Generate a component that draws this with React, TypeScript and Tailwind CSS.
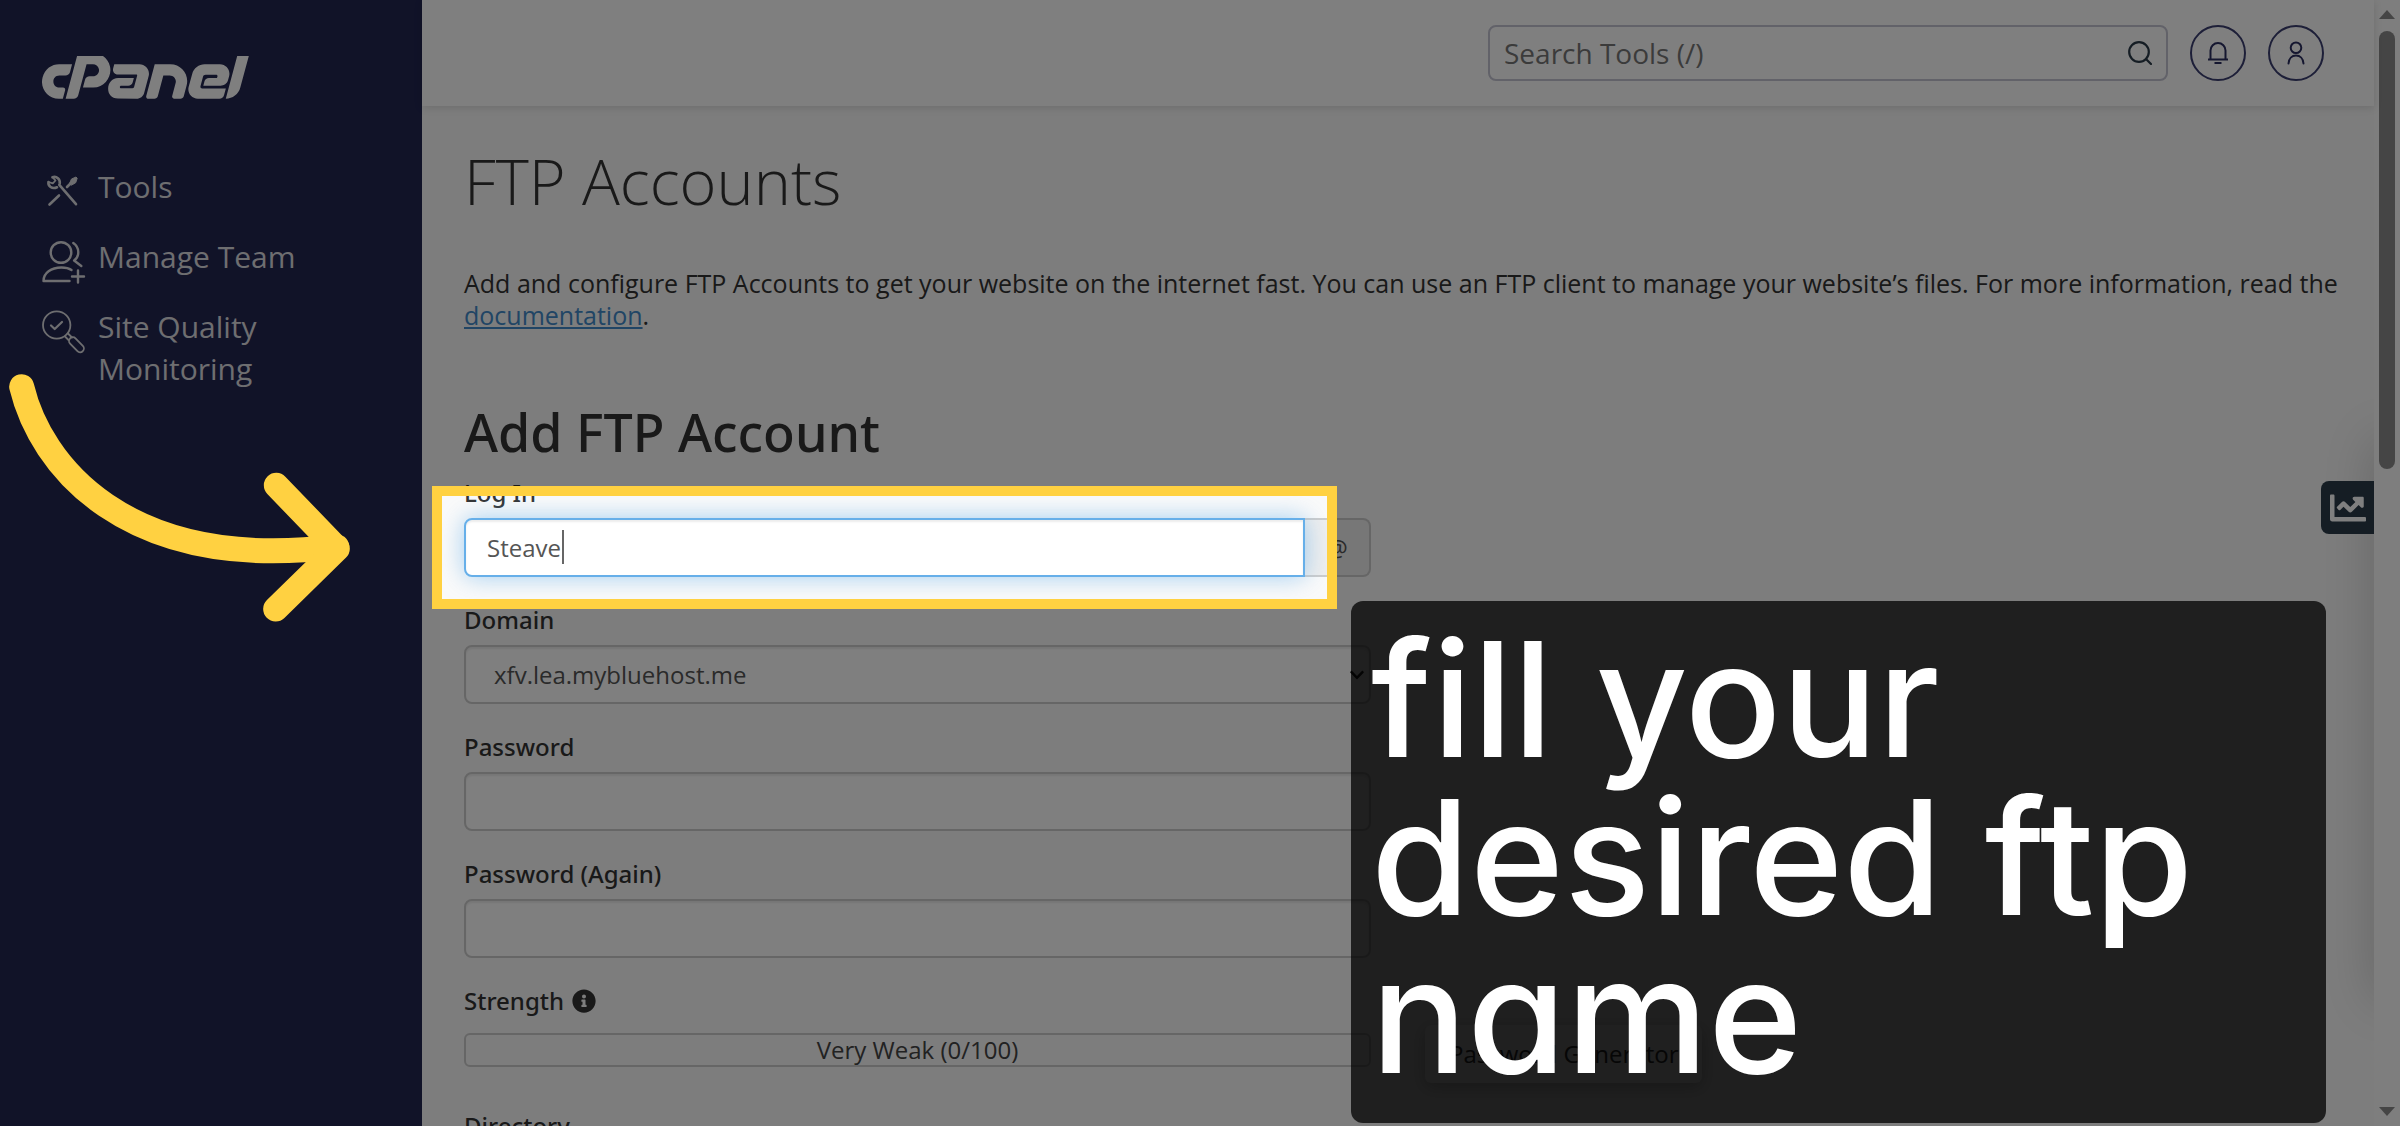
import type { ReactNode } from "react";
import { FaChartLine, FaChevronDown, FaCpanel, FaInfoCircle } from "react-icons/fa";

const controlClass =
  "block h-[59px] w-full rounded-lg border-2 border-[#ccc] bg-white px-[21px] text-2xl text-[#555] shadow-[inset_0_2px_2px_rgba(0,0,0,0.075)] outline-none";

function ToolsIcon() {
  return (
    <svg viewBox="0 0 44 44" className="size-11" fill="none" stroke="currentColor" strokeWidth="2.6" strokeLinecap="round" strokeLinejoin="round" aria-hidden="true">
      <path d="M10.5 7.2c4-1.400 8 1.800 7.200 6.300l-.4 1.400L34 34.200M6.500 12c-.8 4 3.500 7.500 8.500 5.300" />
      <path d="M10.500 7.200l3 3.300-2.700 2.800L6.500 12" strokeWidth="1.800" />
      <path d="M7.500 34.500l9.500-9M25 17l4-4" />
      <path d="M27.500 13.500l2-4.500 4.500-2 1.200 1.200-1.500 4.500-4 2.300z" fill="currentColor" strokeWidth="1" />
    </svg>
  );
}

function TeamIcon() {
  return (
    <svg viewBox="0 0 44 44" className="size-11" fill="none" stroke="currentColor" strokeWidth="2.400" strokeLinecap="round" strokeLinejoin="round" aria-hidden="true">
      <circle cx="19" cy="12.500" r="10.300" />
      <path d="M31.300 3c6.500 4.500 6.500 13.500.8 17.500l7.200 5.500" />
      <path d="M27.500 41H1.500c0-8 7.500-13.500 18-13.500 4 0 7.500.8 10 2.500" />
      <path d="M36 30.500v12M30 36.500h12" />
    </svg>
  );
}

function QualityIcon() {
  return (
    <svg viewBox="0 0 44 44" className="size-11" fill="none" stroke="currentColor" strokeWidth="1.800" strokeLinecap="round" strokeLinejoin="round" aria-hidden="true">
      <circle cx="14.700" cy="15" r="13.700" />
      <path d="M9 15.500l3.700 3.500 7.300-7" strokeWidth="2.200" />
      <path d="M23 26.500l3.500 3.500M26 23.500l4 4" />
      <rect x="25.500" y="31" width="18" height="7.500" rx="3.700" transform="rotate(46 34.500 34.700)" />
    </svg>
  );
}

function NavItem({ icon, children }: { icon: ReactNode; children: ReactNode }) {
  return (
    <li>
      <a href="#" className="flex items-start gap-3 text-[30px] leading-[42px] text-[#dcdce0]">
        <span className="mt-1 h-9 shrink-0">{icon}</span>
        <span>{children}</span>
      </a>
    </li>
  );
}

function Label({ htmlFor, children }: { htmlFor: string; children: ReactNode }) {
  return (
    <label htmlFor={htmlFor} className="block font-['Noto_Sans'] text-2xl leading-8 font-medium text-[#333]">
      {children}
    </label>
  );
}

function PasswordField({ id, label }: { id: string; label: string }) {
  return (
    <div className="flex flex-col gap-[9px]">
      <Label htmlFor={id}>{label}</Label>
      <input id={id} type="password" className={controlClass} />
    </div>
  );
}

function Sidebar() {
  return (
    <aside className="w-[422px] shrink-0 bg-[#222651] px-[42px] pt-14">
      <a href="#" aria-label="cPanel" className="block text-white">
        <FaCpanel viewBox="0 188 640 136" className="h-11 w-[207px]" />
      </a>
      <nav className="mt-[66px]">
        <ul className="flex flex-col gap-7">
          <NavItem icon={<ToolsIcon />}>Tools</NavItem>
          <NavItem icon={<TeamIcon />}>Manage Team</NavItem>
          <NavItem icon={<QualityIcon />}>Site Quality Monitoring</NavItem>
        </ul>
      </nav>
    </aside>
  );
}

function Header() {
  const round = "flex size-14 shrink-0 items-center justify-center rounded-full border-2 border-[#3b3e70] text-[#2b2e60]";
  return (
    <header className="flex h-[106px] items-center justify-end gap-[22px] bg-white pr-[50px] pl-10 shadow-[0_2px_8px_rgba(0,0,0,0.12)]">
      <form role="search" className="flex h-14 w-full max-w-[680px] items-center rounded-lg border-2 border-[#c4c4d2] bg-white px-3.5">
        <input aria-label="Search Tools" type="text" placeholder="Search Tools (/)" className="min-w-0 flex-1 text-[28px] outline-none placeholder:text-[#777]" />
        <button type="button" aria-label="Search" className="text-[#2a3a48]">
          <svg viewBox="0 0 24 24" className="size-6" fill="none" stroke="currentColor" strokeWidth="2.200" strokeLinecap="round" aria-hidden="true">
            <circle cx="11" cy="11" r="9.800" />
            <path d="M18 18l5 5" />
          </svg>
        </button>
      </form>
      <button type="button" aria-label="Notifications" className={round}>
        <svg viewBox="0 0 24 24" className="size-6" fill="none" stroke="currentColor" strokeWidth="2" aria-hidden="true">
          <path d="M2 18.500h20M4.500 18.500v-9a7.500 7.500 0 0 1 15 0v9M8.500 22h7" />
        </svg>
      </button>
      <button type="button" aria-label="User account" className={round}>
        <svg viewBox="0 0 24 24" className="size-6" fill="none" stroke="currentColor" strokeWidth="2" strokeLinecap="round" aria-hidden="true">
          <circle cx="12" cy="6.700" r="5.300" />
          <path d="M4.500 22.500c.3-5 3.500-8 7.500-8s7.200 3 7.500 8" />
        </svg>
      </button>
    </header>
  );
}

function AccountForm() {
  return (
    <form className="mt-4 flex flex-col gap-[27px]">
      <div className="flex w-full max-w-[907px] flex-col gap-[9px]">
        <Label htmlFor="login">Log In</Label>
        <div className="relative flex">
          <div className="relative z-10 min-w-0 flex-1">
            <input
              id="login"
              type="text"
              defaultValue="Steave"
              className="block h-[59px] w-full rounded-l-lg border-2 border-[#66afe9] bg-white px-[21px] text-2xl text-[#555] shadow-[inset_0_2px_2px_rgba(0,0,0,0.075),0_0_24px_rgba(102,175,233,0.6)] outline-none"
            />
            <span className="absolute top-3 left-[98px] h-[34px] w-0.5 bg-[#666]" />
          </div>
          <span className="flex w-[66px] items-center justify-center rounded-r-lg border-2 border-l-0 border-[#ccc] bg-[#eee] text-2xl text-[#555]">@</span>
          {/* Spotlight frame: its outer shadow dims the rest of the page */}
          <div className="pointer-events-none absolute -inset-y-8 right-[34px] -left-8 z-40 border-10 border-[#ffd141] shadow-[0_0_0_3000px_rgba(0,0,0,0.5)]" />
        </div>
      </div>

      <div className="flex w-full max-w-[907px] flex-col gap-[9px]">
        <Label htmlFor="domain">Domain</Label>
        <div className="relative">
          <select id="domain" className="block h-[59px] w-full appearance-none rounded-lg border-2 border-[#ccc] bg-white px-7 text-2xl text-[#555] shadow-[inset_0_2px_2px_rgba(0,0,0,0.075)] outline-none">
            <option>xfv.lea.mybluehost.me</option>
          </select>
          <FaChevronDown className="pointer-events-none absolute top-[22px] right-1.5 size-4 text-[#222]" />
        </div>
      </div>

      <div className="flex w-full max-w-[907px] flex-col gap-[27px]">
        <PasswordField id="password" label="Password" />
        <PasswordField id="password-again" label="Password (Again)" />
      </div>

      <div className="flex flex-col gap-2">
        <div className="flex items-center gap-2">
          <Label htmlFor="strength">Strength</Label>
          <button type="button" aria-label="About password strength" className="text-[#333]">
            <FaInfoCircle className="size-6" />
          </button>
        </div>
        <div className="flex items-start gap-[54px]">
          <output id="strength" className="mt-2 flex h-[34px] w-full max-w-[907px] items-center justify-center rounded-md border-2 border-[#ccc] text-2xl leading-8 text-[#444]">
            Very Weak (0/100)
          </output>
          <button type="button" className="h-[58px] shrink-0 rounded-md bg-white px-6 text-2xl text-[#333] shadow-[0_4px_16px_rgba(0,0,0,0.25)]">
            Password Generator
          </button>
        </div>
      </div>

      <div className="flex w-full max-w-[907px] flex-col gap-[9px]">
        <Label htmlFor="directory">Directory</Label>
        <input id="directory" type="text" className={controlClass} />
      </div>
    </form>
  );
}

function Scrollbar() {
  return (
    <div className="flex w-[26px] shrink-0 flex-col items-center bg-[#fcfcfc] py-2.5" aria-hidden="true">
      <span className="border-x-8 border-b-9 border-x-transparent border-b-[#8a8a8a]" />
      <span className="mt-3 h-[438px] w-4 rounded-full bg-[#8a8a8a]" />
      <span className="mt-auto border-x-8 border-t-9 border-x-transparent border-t-[#8a8a8a]" />
    </div>
  );
}

export default function App() {
  return (
    <div className="relative flex h-screen overflow-hidden bg-[#fafafa] font-['Open_Sans','Noto_Sans',sans-serif] text-[#333]">
      <Sidebar />
      <div className="relative min-w-0 flex-1">
        <Header />
        <main className="pt-10 pr-6 pl-[42px]">
          <h1 className="text-[63px] leading-[70px] font-light">FTP Accounts</h1>
          <p className="mt-[51px] text-[25px] leading-8">
            Add and configure FTP Accounts to get your website on the internet fast. You can use an FTP client to manage your website’s files. For more information, read the{" "}
            <a href="#" className="text-[#428bca] underline">documentation</a>.
          </p>
          <h2 className="mt-[72px] font-['Noto_Sans'] text-[52px] leading-[58px] font-medium">Add FTP Account</h2>
          <AccountForm />
        </main>
        <div className="pointer-events-none absolute inset-y-0 right-0 w-20 overflow-hidden">
          <div className="absolute top-[440px] left-full h-[560px] w-10 shadow-[0_0_50px_rgba(0,0,0,0.2)]" />
        </div>
        <button type="button" aria-label="Statistics" className="absolute top-[481px] right-0 flex h-[53px] w-[53px] items-center justify-center rounded-l-lg bg-[#2a3a48] text-white">
          <FaChartLine className="size-9" />
        </button>
      </div>
      <Scrollbar />

      <svg viewBox="0 0 1110 840" className="pointer-events-none absolute top-[360px] left-0 z-50 w-[370px]" fill="none" stroke="#ffd141" strokeWidth="75" strokeLinecap="round" strokeLinejoin="round" aria-hidden="true">
        <path d="M65 80C120 310 370 640 1010 560" />
        <path d="M829 376L1012 566 827 747" />
      </svg>
      <p className="absolute top-[601px] right-[74px] z-50 w-[975px] rounded-xl bg-black/75 px-5 pt-[19px] pb-[29px] font-['Inter'] text-[160px] leading-[158px] font-medium text-white [font-feature-settings:'cv11']">
        fill your desired ftp name
      </p>
    </div>
  );
}
